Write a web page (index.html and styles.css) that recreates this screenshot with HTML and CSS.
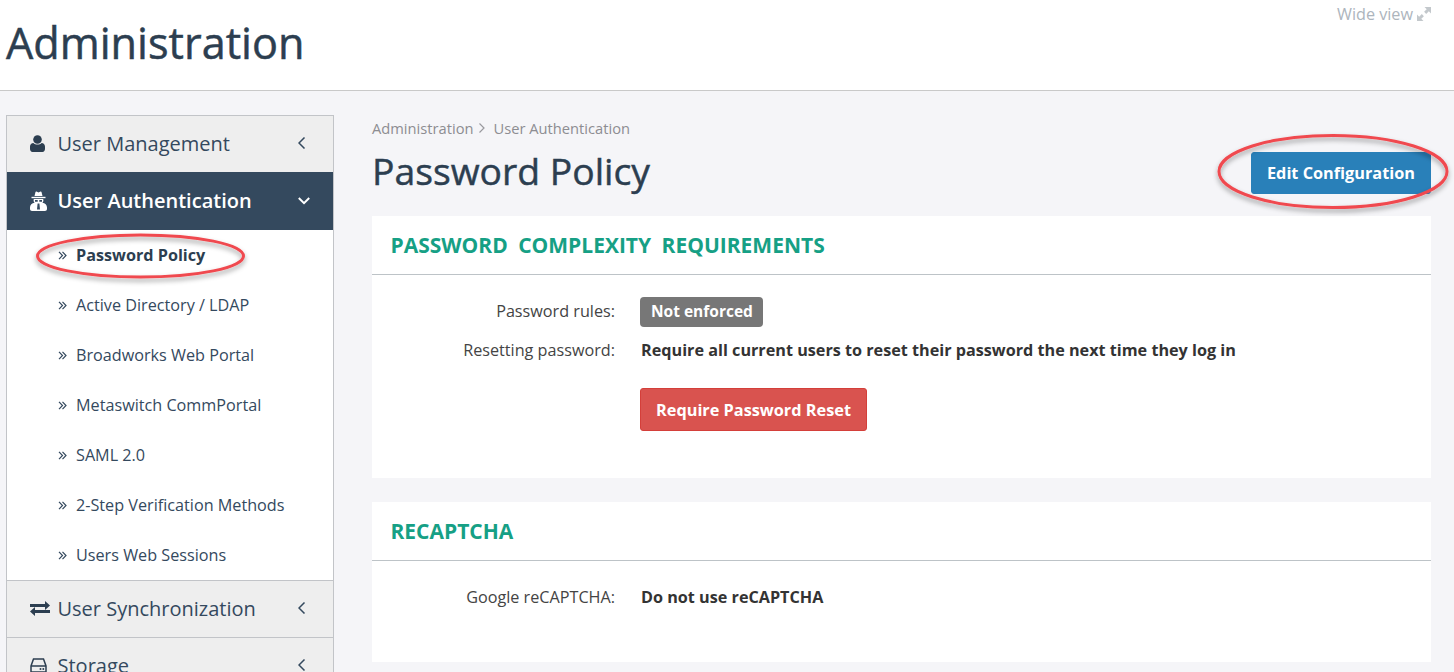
FILE: index.html
```html
<!DOCTYPE html>
<html lang="en">
<head>
<meta charset="utf-8">
<title>Password Policy</title>
<link rel="stylesheet" href="styles.css">
</head>
<body>
<header class="top">
  <h1 class="app-title">Administration</h1>
  <a class="wide">Wide view
    <svg class="wide-ic" viewBox="0 0 14 14" width="14" height="14"><path d="M7.500 0H14v6.500l-2.200-2.200-2.600 2.600-2.100-2.100 2.600-2.600zM6.500 14H0V7.500l2.200 2.200 2.600-2.600 2.100 2.100-2.600 2.600z"/></svg>
  </a>
</header>
<div class="layout">
  <nav class="side">
    <div class="nav-head">
      <svg class="nav-ic ic-user" viewBox="0 0 15 17" width="15" height="17"><circle cx="7.500" cy="4.500" r="4.300"/><path d="M0 14v-2.500C0 9.500 1.500 8 3.400 7.900c1 1 2.500 1.600 4.100 1.600s3.100-.6 4.100-1.600C13.500 8 15 9.500 15 11.500V14c0 1.500-1 3-2.500 3h-10C1 17 0 15.500 0 14z"/></svg>
      <span class="nav-label">User Management</span>
      <svg class="chev" viewBox="0 0 12 12" width="12" height="12"><path d="M6.500.5 1 6l5.500 5.500"/></svg>
    </div>
    <div class="nav-head active">
      <svg class="nav-ic ic-agent" viewBox="0 0 17 20" width="17" height="20"><path d="M4.500 5 5.500 1c.1-.5.500-.7 1-.5L8.500 1.500 10.500.5c.5-.2.900 0 1 .5l1 4z"/><path d="M1.500 5.800h14v1.400h-14z"/><path fill-rule="evenodd" d="M3.800 8h9.400c.5 1.700.1 3-.8 3.800 2.700.2 4.600 2.200 4.600 4.700V18c0 1.100-.9 2-2 2H2c-1.100 0-2-.9-2-2v-1.500c0-2.500 1.900-4.500 4.600-4.700C3.700 11 3.300 9.700 3.800 8zM5 9v1.700h2.700V9zm4.300 0v1.700H12V9zM7.600 12.500 7 18.500h3l-.6-6z"/></svg>
      <span class="nav-label">User Authentication</span>
      <svg class="chev" viewBox="0 0 12 12" width="12" height="12"><path d="M.8 3 6 8.200 11.200 3"/></svg>
    </div>
    <ul class="sub">
      <li class="current"><svg class="raquo" viewBox="0 0 9 9" width="9" height="9"><path d="M1 .8 4.500 4.500 1 8.200M4.500.8 8 4.500 4.500 8.200"/></svg>Password Policy</li>
      <li><svg class="raquo" viewBox="0 0 9 9" width="9" height="9"><path d="M1 .8 4.500 4.500 1 8.200M4.500.8 8 4.500 4.500 8.200"/></svg>Active Directory / LDAP</li>
      <li><svg class="raquo" viewBox="0 0 9 9" width="9" height="9"><path d="M1 .8 4.500 4.500 1 8.200M4.500.8 8 4.500 4.500 8.200"/></svg>Broadworks Web Portal</li>
      <li><svg class="raquo" viewBox="0 0 9 9" width="9" height="9"><path d="M1 .8 4.500 4.500 1 8.200M4.500.8 8 4.500 4.500 8.200"/></svg>Metaswitch CommPortal</li>
      <li><svg class="raquo" viewBox="0 0 9 9" width="9" height="9"><path d="M1 .8 4.500 4.500 1 8.200M4.500.8 8 4.500 4.500 8.200"/></svg>SAML 2.0</li>
      <li><svg class="raquo" viewBox="0 0 9 9" width="9" height="9"><path d="M1 .8 4.500 4.500 1 8.200M4.500.8 8 4.500 4.500 8.200"/></svg>2-Step Verification Methods</li>
      <li><svg class="raquo" viewBox="0 0 9 9" width="9" height="9"><path d="M1 .8 4.500 4.500 1 8.200M4.500.8 8 4.500 4.500 8.200"/></svg>Users Web Sessions</li>
    </ul>
    <div class="nav-head ruled">
      <svg class="nav-ic ic-sync" viewBox="0 0 20 15" width="20" height="15"><path d="M20 4.500 15 0v3H0v3h15v3zM0 10.500 5 6v3h15v3H5v3z"/></svg>
      <span class="nav-label">User Synchronization</span>
      <svg class="chev" viewBox="0 0 12 12" width="12" height="12"><path d="M6.500.5 1 6l5.500 5.500"/></svg>
    </div>
    <div class="nav-head ruled">
      <svg class="nav-ic ic-drive" viewBox="0 0 17 15" width="17" height="15"><path class="drive" d="M1 8 3.500 1h10L16 8v6H1zM1 8h15"/><circle cx="10.500" cy="11" r="1"/><circle cx="13.300" cy="11" r="1"/></svg>
      <span class="nav-label">Storage</span>
      <svg class="chev" viewBox="0 0 12 12" width="12" height="12"><path d="M6.500.5 1 6l5.500 5.500"/></svg>
    </div>
  </nav>
  <main class="content">
    <div class="crumbs">
      <span>Administration</span>
      <svg class="crumb-sep" viewBox="0 0 8 12" width="8" height="12"><path d="M1.500 1.500 6 6l-4.500 4.500"/></svg>
      <span>User Authentication</span>
    </div>
    <div class="title-row">
      <h2 class="page-title">Password Policy</h2>
      <button class="btn btn-blue">Edit Configuration</button>
    </div>
    <section class="card first">
      <h3 class="card-head">PASSWORD COMPLEXITY REQUIREMENTS</h3>
      <div class="card-body">
        <div class="row badge-row">
          <div class="lab">Password rules:</div>
          <div class="val"><span class="badge">Not enforced</span></div>
        </div>
        <div class="row">
          <div class="lab">Resetting password:</div>
          <div class="val strong">Require all current users to reset their password the next time they log in</div>
        </div>
        <div class="row action">
          <div class="lab"></div>
          <div class="val"><button class="btn btn-red">Require Password Reset</button></div>
        </div>
      </div>
    </section>
    <section class="card second">
      <h3 class="card-head">RECAPTCHA</h3>
      <div class="card-body">
        <div class="row">
          <div class="lab">Google reCAPTCHA:</div>
          <div class="val strong">Do not use reCAPTCHA</div>
        </div>
      </div>
    </section>
  </main>
</div>
<svg class="marks" width="1454" height="672" viewBox="0 0 1454 672">
  <defs>
    <filter id="sh" x="-10%" y="-30%" width="120%" height="170%">
      <feDropShadow dx="0" dy="3" stdDeviation="2.500" flood-color="#000" flood-opacity=".38"/>
    </filter>
  </defs>
  <ellipse class="mark" cx="140.500" cy="256" rx="103" ry="21"/>
  <ellipse class="mark" cx="1333" cy="171.500" rx="114" ry="36"/>
</svg>
</body>
</html>
```
FILE: styles.css
```css
* { box-sizing: border-box; }
html, body { margin: 0; height: 672px; overflow: hidden; }
body {
  background: #f5f5f8;
  font-family: "Open Sans", sans-serif;
  color: #2c3e50;
  position: relative;
}
.top {
  height: 91px;
  background: #fff;
  border-bottom: 1px solid #c9c9c9;
  padding: 15px 6px 0;
  display: flex;
  justify-content: space-between;
  align-items: flex-start;
}
.app-title {
  margin: 0;
  font-size: 43.200px;
  line-height: 56px;
  font-weight: 400;
  -webkit-text-stroke: .5px #2c3e50;
  color: #2c3e50;
}
.wide {
  margin: -11px 17px 0 0;
  color: #adb5bd;
  font-size: 16.200px;
  line-height: 20px;
  display: flex;
  align-items: center;
  gap: 4px;
}
.wide-ic { fill: #c3c8cc; }
.layout {
  display: flex;
  align-items: flex-start;
  padding: 24px 23px 0 6px;
  gap: 38px;
}
.side {
  width: 328px;
  flex: none;
  background: #fff;
  border: 1px solid #c2c4c8;
}
.nav-head {
  height: 56px;
  background: #eee;
  display: flex;
  align-items: center;
  padding: 0 23px 2px 23px;
  color: #34495e;
  font-size: 20px;
}
.nav-ic { flex: none; fill: #2c3e50; }
.ic-user { margin-right: 12.500px; }
.ic-agent { margin-right: 10.500px; }
.ic-sync { margin-right: 7.500px; }
.ic-drive { margin-right: 10.500px; }
.nav-label { flex: 1; white-space: nowrap; }
.chev { flex: none; fill: none; stroke: #34495e; stroke-width: 1.500; }
.nav-head.active {
  height: 58px;
  padding-bottom: 0;
  background: #34495e;
  color: #fff;
  font-weight: 600;
  border-bottom: 1px solid #34495e;
}
.active .nav-ic { fill: #fff; }
.active .chev { stroke: #fff; stroke-width: 2; }
.nav-head.ruled { height: 57px; border-top: 1px solid #c2c4c8; }
.drive { fill: none; stroke: #2c3e50; stroke-width: 1.500; }
.sub { list-style: none; margin: 0; padding: 0; height: 350px; }
.sub li {
  height: 50px;
  display: flex;
  align-items: center;
  padding-left: 51px;
  font-size: 16.200px;
  color: #34495e;
  white-space: nowrap;
}
.raquo { flex: none; margin-right: 9px; fill: none; stroke: #34495e; stroke-width: 1.200; }
.sub li.current { font-weight: 700; color: #2c3e50; }
.content { flex: 1; min-width: 0; }
.crumbs {
  display: flex;
  align-items: center;
  height: 26px;
  margin-bottom: 5px;
  font-size: 14.700px;
  color: #8d8d92;
}
.crumb-sep { margin: 0 7px 0 5px; fill: none; stroke: #9a9a9f; stroke-width: 1.200; }
.title-row {
  display: flex;
  justify-content: space-between;
  align-items: center;
  height: 50px;
  margin-bottom: 20px;
}
.page-title {
  margin: 0;
  font-size: 37.300px;
  line-height: 50px;
  font-weight: 400;
  -webkit-text-stroke: .45px #2c3e50;
  color: #2c3e50;
}
.btn {
  font-family: inherit;
  font-weight: 700;
  color: #fff;
  border-radius: 3px;
  font-size: 16.300px;
  cursor: pointer;
}
.btn-blue {
  width: 180px;
  height: 42px;
  margin-top: 3px;
  background: #2980b9;
  border: 1px solid #2980b9;
  padding: 0;
}
.btn-red {
  width: 227px;
  height: 43px;
  background: #d9534f;
  border: 1px solid #d43f3a;
  padding: 0;
}
.card { background: #fff; margin-bottom: 24px; }
.card.first { height: 262px; }
.card.second { height: 160px; }
.card-head {
  margin: 0;
  height: 59px;
  padding: 0 18.500px;
  display: flex;
  align-items: center;
  border-bottom: 1px solid #bdc3c7;
  font-size: 21px;
  font-weight: 700;
  color: #16a085;
  white-space: pre-wrap;
  word-spacing: 5px;
}
.card-body { padding-top: 21px; }
.second .card-body { padding-top: 25px; }
.row { display: flex; font-size: 16.200px; line-height: 22px; margin-bottom: 17px; }
.row.badge-row { margin-bottom: 12px; line-height: 30px; }
.row.action { margin-top: 27px; }
.lab { width: 243px; flex: none; text-align: right; color: #444; }
.val { padding-left: 25px; color: #333; }
.val.strong { padding-left: 26px; font-weight: 700; }
.badge {
  display: inline-block;
  height: 30px;
  line-height: 29px;
  padding: 0 10px 0 11px;
  background: #777;
  color: #fff;
  font-size: 15.500px;
  font-weight: 700;
  border-radius: 4px;
}
.marks { position: absolute; left: 0; top: 0; pointer-events: none; }
.mark { fill: none; stroke: #f04a4f; stroke-width: 3; filter: url(#sh); }
```
